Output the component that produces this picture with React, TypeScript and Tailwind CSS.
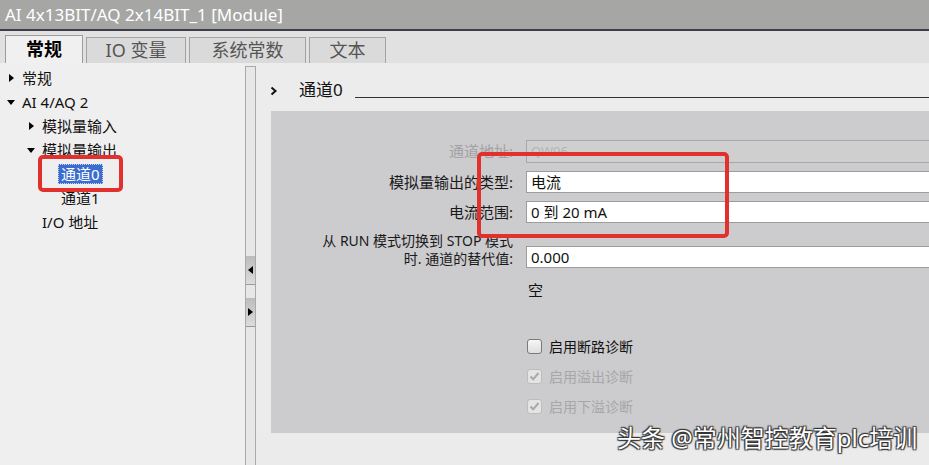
import React from "react";

const F = { fontFamily: '"Noto Sans", "Noto Sans CJK SC", sans-serif' };

function TriRight() {
  return <span className="inline-block w-0 h-0 border-y-[4px] border-y-transparent border-l-[5px] border-l-black" />;
}
function TriDown() {
  return <span className="inline-block w-0 h-0 border-x-[4px] border-x-transparent border-t-[5px] border-t-black" />;
}

function TreeRow({ indent, tri, children }: { indent: number; tri?: "r" | "d"; children: React.ReactNode }) {
  return (
    <div className="h-[24px] flex items-center relative">
      {tri && (
        <span className="absolute flex items-center justify-center w-[10px]" style={{ left: indent - 16 }}>
          {tri === "r" ? <TriRight /> : <TriDown />}
        </span>
      )}
      <div style={{ marginLeft: indent }} className="flex items-center">{children}</div>
    </div>
  );
}

function Check({ checked, disabled, label }: { checked?: boolean; disabled?: boolean; label: string }) {
  return (
    <div className="h-[30px] flex items-center">
      <div
        className={
          "w-[15px] h-[15px] rounded-[3px] border flex items-center justify-center " +
          (disabled ? "border-[#bdbdbd] bg-[#e4e4e4]" : "border-[#7a7a7a] bg-gradient-to-b from-[#f6f6f6] to-[#dedede]")
        }
      >
        {checked && (
          <svg width="11" height="11" viewBox="0 0 11 11">
            <path d="M1.5 5.5 L4.2 8.3 L9.5 2" fill="none" stroke="#a9a9a9" strokeWidth="2" />
          </svg>
        )}
      </div>
      <span className={"ml-[7px] text-[14px] " + (disabled ? "text-[#a7a7a7]" : "text-[#111]")}>{label}</span>
    </div>
  );
}

export default function App() {
  return (
    <div className="w-[929px] h-[465px] overflow-hidden relative flex flex-col bg-[#ececec]" style={F}>
      {/* title */}
      <div className="h-[29px] bg-[#a6a7a5] flex items-center pl-[5px] text-white text-[17px] shrink-0">
        AI 4x13BIT/AQ 2x14BIT_1 [Module]
      </div>
      <div className="h-[2px] bg-[#3b3e48] shrink-0" />
      {/* tabs */}
      <div className="h-[32px] bg-[#e1e1e1] flex items-end pl-[5px] gap-[3px] shrink-0">
        <div className="w-[78px] h-[28px] bg-[#f0f0f0] border border-b-0 border-[#9c9c9c] flex items-center justify-center text-[18px] font-bold text-black">
          常规
        </div>
        <div className="w-[100px] h-[26px] bg-[#dadada] border border-b-0 border-[#a3a3a3] flex items-center justify-center text-[18px] text-[#555]">
          IO 变量
        </div>
        <div className="w-[117px] h-[26px] bg-[#dadada] border border-b-0 border-[#a3a3a3] flex items-center justify-center text-[18px] text-[#555]">
          系统常数
        </div>
        <div className="w-[77px] h-[26px] bg-[#dadada] border border-b-0 border-[#a3a3a3] flex items-center justify-center text-[18px] text-[#555]">
          文本
        </div>
      </div>
      {/* body */}
      <div className="flex-1 flex min-h-0">
        {/* left tree */}
        <div className="w-[245px] bg-[#f0eff0] pt-[3px] text-[15px] text-[#111] relative">
          <TreeRow indent={22} tri="r">常规</TreeRow>
          <TreeRow indent={22} tri="d">AI 4/AQ 2</TreeRow>
          <TreeRow indent={42} tri="r">模拟量输入</TreeRow>
          <TreeRow indent={42} tri="d">模拟量输出</TreeRow>
          <TreeRow indent={58}>
            <span className="px-[2px] h-[20px] flex items-center bg-[#3b6dd0] text-white border border-dotted border-[#c8d4f0]">通道0</span>
          </TreeRow>
          <TreeRow indent={61}>通道1</TreeRow>
          <TreeRow indent={42}>I/O 地址</TreeRow>
          <div className="absolute left-[38px] top-[92px] w-[85px] h-[37px] border-[4px] border-[#e2312d] rounded-[5px]" />
        </div>
        {/* splitter */}
        <div className="w-[11px] mt-[3px] border border-b-0 border-[#a9a9a9] bg-[#e7e7e7] flex flex-col">
          <div className="h-[189px]" />
          <div className="h-[29px] bg-gradient-to-b from-[#bcbcbc] to-[#dcdcdc] border-b border-[#9a9a9a] flex items-center justify-center">
            <span className="inline-block w-0 h-0 border-y-[4px] border-y-transparent border-r-[5px] border-r-black" />
          </div>
          <div className="h-[13px]" />
          <div className="h-[29px] bg-gradient-to-b from-[#bcbcbc] to-[#dcdcdc] border-b border-[#9a9a9a] flex items-center justify-center">
            <span className="inline-block w-0 h-0 border-y-[4px] border-y-transparent border-l-[5px] border-l-black" />
          </div>
        </div>
        {/* right panel */}
        <div className="flex-1 bg-[#ececec] flex flex-col min-w-0">
          <div className="h-[48px] pt-[16px] shrink-0">
            <div className="h-[22px] flex items-end">
              <svg width="8" height="10" viewBox="0 0 8 10" className="ml-[14px] mb-[5px]">
                <path d="M1.5 1.5 L5.5 5 L1.5 8.5" fill="none" stroke="#111" strokeWidth="2" />
              </svg>
              <span className="ml-[21px] text-[17px] leading-[22px] text-[#111]">通道0</span>
              <div className="flex-1 ml-[12px] mb-[3px] h-[1px] bg-[#333]" />
            </div>
          </div>
          <div className="ml-[15px] h-[322px] bg-[#cccbcd] pt-[29px] text-[15px]">
            {/* row 1 disabled */}
            <div className="flex items-center h-[23px]">
              <div className="w-[242px] text-right text-[#a2a2a2]">通道地址:</div>
              <div className="ml-[13px] flex-1 h-[23px] border border-r-0 border-[#a8a8a8] bg-[#cfcfd0] flex items-center pl-[4px] text-[#b4b4b4] text-[13px]">
                QW96
              </div>
            </div>
            <div className="flex items-center h-[22px] mt-[8px]">
              <div className="w-[242px] text-right text-[#1a1a1a]">模拟量输出的类型:</div>
              <div className="ml-[13px] flex-1 h-[22px] border border-r-0 border-[#9c9c9c] bg-white flex items-center pl-[4px] text-[15px] text-[#111]">
                电流
              </div>
            </div>
            <div className="flex items-center h-[22px] mt-[8px]">
              <div className="w-[242px] text-right text-[#1a1a1a]">电流范围:</div>
              <div className="ml-[13px] flex-1 h-[22px] border border-r-0 border-[#9c9c9c] bg-white flex items-center pl-[4px] text-[15px] text-[#111]">
                0 到 20 mA
              </div>
            </div>
            <div className="flex items-end mt-[9px]">
              <div className="w-[242px] text-right text-[14px] text-[#1a1a1a] leading-[18px] whitespace-nowrap">
                从 RUN 模式切换到 STOP 模式<br />时. 通道的替代值:
              </div>
              <div className="ml-[13px] flex-1 h-[22px] border border-r-0 border-[#9c9c9c] bg-white flex items-center pl-[4px] text-[15px] text-[#111]">
                0.000
              </div>
            </div>
            <div className="ml-[257px] mt-[12px] h-[20px] flex items-center text-[15px] text-[#111]">空</div>
            <div className="ml-[256px] mt-[31px]">
              <Check label="启用断路诊断" />
              <Check label="启用溢出诊断" checked disabled />
              <Check label="启用下溢诊断" checked disabled />
            </div>
          </div>
          <div className="flex-1 bg-[#ebebeb]" />
        </div>
      </div>
      {/* red highlight box */}
      <div className="absolute left-[477px] top-[152px] w-[252px] h-[86px] border-[4px] border-[#e2312d] rounded-[5px]" />
      {/* watermark */}
      <div className="absolute left-[617px] top-[423px] text-[24px] leading-[30px] text-white whitespace-nowrap [text-shadow:1px_1px_1px_#333,-1px_-1px_1px_#333,1px_-1px_1px_#333,-1px_1px_1px_#333]">
        头条 @常州智控教育plc培训
      </div>
    </div>
  );
}
